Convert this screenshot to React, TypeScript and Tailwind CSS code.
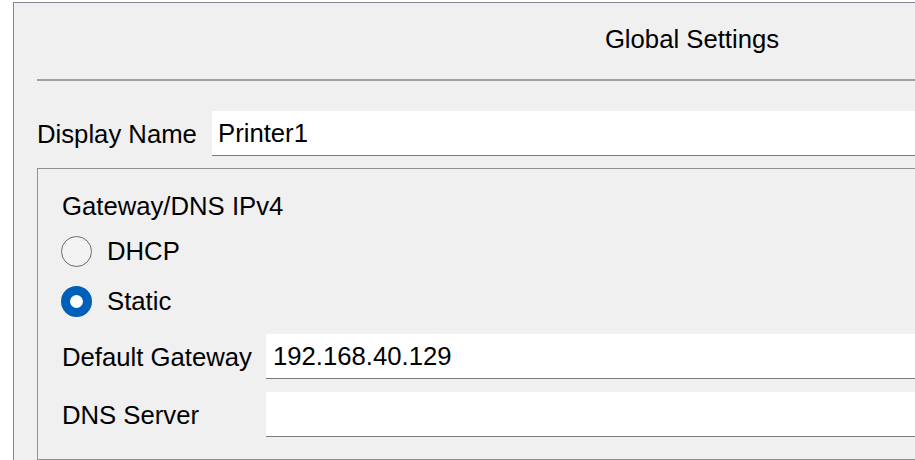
import React from "react";

function Radio({ checked }: { checked: boolean }) {
  if (checked) {
    return (
      <div className="-ml-px flex h-[31px] w-[31px] shrink-0 items-center justify-center rounded-full bg-[#005fb8]">
        <div className="h-[13px] w-[13px] rounded-full bg-white" />
      </div>
    );
  }
  return (
    <div className="-ml-px h-[31px] w-[31px] shrink-0 rounded-full border-[1.5px] border-[#6b6b6b] bg-[#f3f3f3]" />
  );
}

export default function App() {
  return (
    <div className="h-[460px] w-[915px] overflow-hidden bg-white font-['Liberation_Sans',Arial,sans-serif] text-[25.7px] leading-[30px] text-black">
      <div className="ml-[13px] mt-[2px] h-[458px] w-[1400px] border-l border-t border-[#828790] bg-[#f0f0f0] pl-[23px] pt-[21px]">
        <div className="w-[1310px] text-center">Global Settings</div>
        <div className="mt-[25px] h-[2px] bg-[#a0a0a0]" />
        <div className="mt-[30px] flex items-center">
          <span className="w-[175px] shrink-0">Display Name</span>
          <div className="flex h-[45px] flex-1 items-center border-b border-[#7a7a7a] bg-white pl-[6px]">
            Printer1
          </div>
        </div>
        <div className="mt-[12px] border border-[#8f8f8f] pb-[22px] pl-[24px] pt-[22px]">
          <div>Gateway/DNS IPv4</div>
          <div className="mt-[15px] flex h-[30px] items-center gap-[15px]">
            <Radio checked={false} />
            <span>DHCP</span>
          </div>
          <div className="mt-[20px] flex h-[30px] items-center gap-[15px]">
            <Radio checked={true} />
            <span>Static</span>
          </div>
          <div className="mt-[18px] flex items-center">
            <span className="w-[204px] shrink-0">Default Gateway</span>
            <div className="flex h-[45px] flex-1 items-center border-b border-[#7a7a7a] bg-white pl-[7px]">
              192.168.40.129
            </div>
          </div>
          <div className="mt-[13px] flex items-center">
            <span className="w-[204px] shrink-0">DNS Server</span>
            <div className="flex h-[45px] flex-1 items-center border-b border-[#7a7a7a] bg-white pl-[7px]" />
          </div>
        </div>
      </div>
    </div>
  );
}
